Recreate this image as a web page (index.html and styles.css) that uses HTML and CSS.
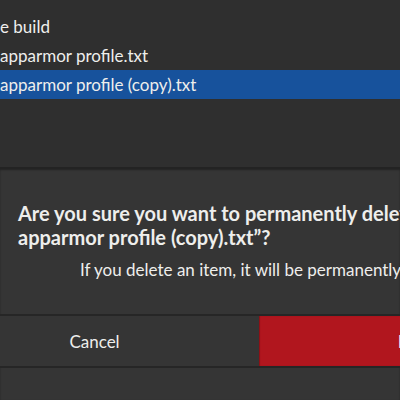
FILE: index.html
```html
<!DOCTYPE html>
<html lang="en">
<head>
<meta charset="utf-8">
<title>Delete file</title>
<link rel="stylesheet" href="styles.css">
</head>
<body>
  <main class="window">
    <ul class="files">
      <li class="file">e build</li>
      <li class="file">apparmor profile.txt</li>
      <li class="file selected">apparmor profile (copy).txt</li>
    </ul>

    <section class="dialog" role="alertdialog">
      <div class="message">
        <h1 class="heading">
          <span class="line">Are you sure you want to permanently delete “</span>
          <span class="line">apparmor profile (copy).txt”?</span>
        </h1>
        <p class="detail">If you delete an item, it will be permanently lost.</p>
      </div>
      <div class="actions">
        <button class="btn cancel">Cancel</button>
        <button class="btn destructive">Delete</button>
      </div>
    </section>
  </main>
</body>
</html>
```

FILE: styles.css
```css
html, body {
  margin: 0;
  padding: 0;
  width: 400px;
  height: 400px;
  overflow: hidden;
  background: #353535;
}

.window {
  display: flex;
  flex-direction: column;
  width: 400px;
  height: 400px;
  font-family: "Lato", "Noto Sans", sans-serif;
  color: #eeeeec;
}

/* file list behind the dialog */
.files {
  list-style: none;
  margin: 0;
  padding: 12px 0 0;
  height: 155px;
  background: #2f2f2f;
  flex: none;
}

.file {
  height: 29px;
  line-height: 29px;
  font-size: 17px;
  white-space: nowrap;
}

.file.selected {
  background: #17529c;
}

/* message dialog */
.dialog {
  flex: 1;
  display: flex;
  flex-direction: column;
  background: #353535;
  border-top: 2px solid #232323;
  box-shadow: inset 0 1px 2px rgba(0, 0, 0, 0.35);
}

.message {
  padding: 32px 0 0 18px;
  height: 145px;
  box-sizing: border-box;
  white-space: nowrap;
}

.heading {
  margin: 0;
  font-size: 20px;
  font-weight: 700;
  line-height: 24px;
}

.line {
  display: block;
}

.detail {
  margin: 11px 0 0 62px;
  font-size: 17px;
  line-height: 20px;
}

.actions {
  display: flex;
  margin-left: -70px;
  border-top: 2px solid #262626;
  border-bottom: 2px solid #262626;
  height: 50px;
  flex: none;
}

.btn {
  flex: none;
  width: 329px;
  border: none;
  margin: 0;
  padding: 0;
  font: inherit;
  font-size: 17px;
  color: #eeeeec;
  background: #353535;
}

.btn.destructive {
  width: 327px;
  background: #b1161e;
  box-shadow: inset 1px 0 1px #8a1116;
}
```
